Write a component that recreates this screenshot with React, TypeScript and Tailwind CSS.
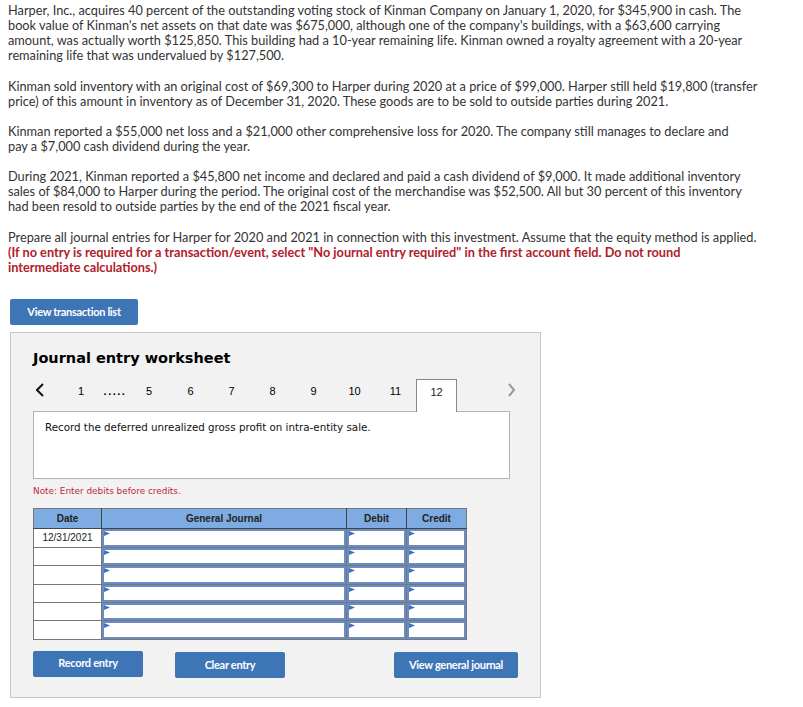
import React from "react";

const body = { fontFamily: '"Lato", "Open Sans", sans-serif' };
const verdana = { fontFamily: '"DejaVu Sans", Verdana, sans-serif' };
const arial = { fontFamily: '"Liberation Sans", Arial, sans-serif' };

const Flag = () => (
  <svg className="absolute left-0 top-0" width="6" height="6" viewBox="0 0 6 6">
    <polygon points="0,0 6,2.5 0,5" fill="#3f74c0" />
  </svg>
);

const InputCell = ({ tall }: { tall: boolean }) => (
  <td className="border border-[#777] p-0">
    <div className={`relative ${tall ? "h-[18px]" : "h-[17px]"} border-2 border-[#6a8cc4] bg-white`}>
      <Flag />
    </div>
  </td>
);

const Btn = ({ label, w }: { label: string; w: string }) => (
  <button
    className={`${w} h-[26px] rounded-[2px] bg-[#3e75b7] text-[11px] font-bold tracking-[-0.3px] text-white`}
    style={body}
  >
    {label}
  </button>
);

export default function App() {
  const rows = [true, false, true, false, false, true];
  return (
    <div className="min-h-screen bg-white text-[#333]">
      <div className="px-2 pt-[3px] text-[12.75px] leading-[15px]" style={body}>
        <p className="mb-[16px]">
          Harper, Inc., acquires 40 percent of the outstanding voting stock of Kinman Company on January 1, 2020, for $345,900 in cash. The
          <br />
          book value of Kinman's net assets on that date was $675,000, although one of the company's buildings, with a $63,600 carrying
          <br />
          amount, was actually worth $125,850. This building had a 10-year remaining life. Kinman owned a royalty agreement with a 20-year
          <br />
          remaining life that was undervalued by $127,500.
        </p>
        <p className="mb-[15px]">
          Kinman sold inventory with an original cost of $69,300 to Harper during 2020 at a price of $99,000. Harper still held $19,800 (transfer
          <br />
          price) of this amount in inventory as of December 31, 2020. These goods are to be sold to outside parties during 2021.
        </p>
        <p className="mb-[15px]">
          Kinman reported a $55,000 net loss and a $21,000 other comprehensive loss for 2020. The company still manages to declare and
          <br />
          pay a $7,000 cash dividend during the year.
        </p>
        <p className="mb-[16px]">
          During 2021, Kinman reported a $45,800 net income and declared and paid a cash dividend of $9,000. It made additional inventory
          <br />
          sales of $84,000 to Harper during the period. The original cost of the merchandise was $52,500. All but 30 percent of this inventory
          <br />
          had been resold to outside parties by the end of the 2021 fiscal year.
        </p>
        <p>
          Prepare all journal entries for Harper for 2020 and 2021 in connection with this investment. Assume that the equity method is applied.
          <br />
          <span className="font-bold text-[#b0202a]">
            (If no entry is required for a transaction/event, select "No journal entry required" in the first account field. Do not round
            <br />
            intermediate calculations.)
          </span>
        </p>
      </div>

      <div className="ml-[10px] mt-[23px]">
        <Btn label="View transaction list" w="w-[128px]" />
      </div>

      <div className="ml-[10px] mt-[7px] h-[366px] w-[531px] border border-[#c6c6c6] bg-[#f2f2f2] pl-[22px]">
        <h2 className="mt-[15px] text-[14.5px] font-bold leading-[20px] text-black" style={verdana}>
          Journal entry worksheet
        </h2>

        <div className="mt-[11px] flex h-[32px] items-start text-[11px] leading-[13px] text-black" style={arial}>
          <div className="flex w-[31px] items-center pl-[2px] pt-[4px]">
            <svg width="10" height="14" viewBox="0 0 10 14">
              <polyline points="8,1 2,7 8,13" fill="none" stroke="#111" strokeWidth="2" />
            </svg>
          </div>
          <span className="w-[34px] pt-[6px] text-center">1</span>
          <span className="w-[34px] pt-[6px] text-center font-bold tracking-[1.5px]">.....</span>
          <span className="w-[34px] pt-[6px] text-center">5</span>
          <div className="ml-[4px] flex pt-[6px]">
            {["6", "7", "8", "9", "10", "11"].map((n) => (
              <span key={n} className="w-[41px] text-center">
                {n}
              </span>
            ))}
          </div>
          <div className="relative z-10 h-[33px] w-[41px] border border-b-0 border-[#888] bg-white pt-[6px] text-center text-[#222]">
            12
          </div>
          <div className="ml-[50px] flex items-center pt-[4px]">
            <svg width="9" height="14" viewBox="0 0 9 14">
              <polyline points="2,1 7,7 2,13" fill="none" stroke="#999" strokeWidth="2" />
            </svg>
          </div>
        </div>

        <div className="h-[68px] w-[477px] border border-[#b5b5b5] bg-white px-[11px] pt-[8px] text-[10.3px] text-[#111]" style={verdana}>
          Record the deferred unrealized gross profit on intra-entity sale.
        </div>

        <p className="mt-[6px] text-[8.9px] text-[#c0283c]" style={verdana}>
          Note: Enter debits before credits.
        </p>

        <table className="mt-[9px] w-[433px] table-fixed border-collapse text-[10px]" style={arial}>
          <colgroup>
            <col className="w-[68px]" />
            <col className="w-[245px]" />
            <col className="w-[60px]" />
            <col className="w-[60px]" />
          </colgroup>
          <thead>
            <tr className="h-[20px] bg-[#7eabe1] font-bold text-[#222]">
              <th className="border border-[#444] border-t-[#777] border-l-[#777]">Date</th>
              <th className="border border-[#444] border-t-[#777]">General Journal</th>
              <th className="border border-[#444] border-t-[#777]">Debit</th>
              <th className="border border-[#444] border-t-[#777] border-r-[#777]">Credit</th>
            </tr>
          </thead>
          <tbody>
            {rows.map((tall, i) => (
              <tr key={i}>
                <td className="border border-[#777] bg-white text-center text-[#222]">
                  {i === 0 ? "12/31/2021" : ""}
                </td>
                <InputCell tall={tall} />
                <InputCell tall={tall} />
                <InputCell tall={tall} />
              </tr>
            ))}
          </tbody>
        </table>

        <div className="mt-[11px] flex">
          <Btn label="Record entry" w="w-[110px]" />
          <div className="ml-[32px]">
            <Btn label="Clear entry" w="w-[110px]" />
          </div>
          <div className="ml-[109px]">
            <Btn label="View general journal" w="w-[124px]" />
          </div>
        </div>
      </div>
    </div>
  );
}
